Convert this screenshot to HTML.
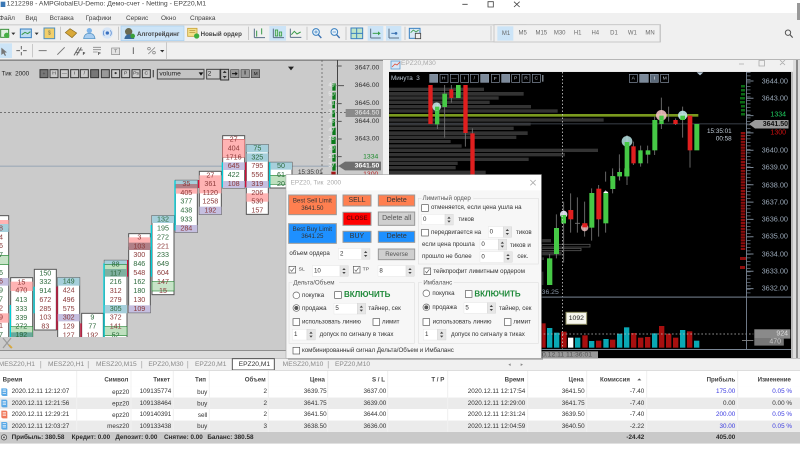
<!DOCTYPE html>
<html><head><meta charset="utf-8">
<style>
html,body{margin:0;padding:0;width:800px;height:457px;overflow:hidden;background:#f0f0f0}
svg{display:block;filter:blur(.25px)}
text{font-family:"Liberation Sans","Noto Sans CJK SC",sans-serif;dominant-baseline:central;white-space:pre}
.e{text-anchor:end}.m{text-anchor:middle}
.fp text{font-size:21.5px;text-anchor:middle}
.G{fill:#2f6b3e}.R{fill:#8b3a3a}
.tb{font-size:19px;fill:#333}
.hd{font-size:18.5px;fill:#444}
.bd{font-size:19px;fill:#2a2a2a;font-weight:bold}
.d{font-size:18.5px;fill:#333}
.inp{fill:#fff;stroke:#ddd}
.btn{stroke:#999;stroke-width:3}
.bt{font-size:21px;fill:#333;text-anchor:middle}
.tab{font-size:20px;fill:#888}
.px{font-size:7px;fill:#9aa8b8}
.ic{fill:none;stroke:#5a6f86;stroke-width:3}
.tf{font-size:18px;fill:#6a6a6a;text-anchor:middle}
</style></head>
<body>
<svg xmlns="http://www.w3.org/2000/svg" width="800" height="457" viewBox="0 0 800 457">
<defs>
<clipPath id="cL"><rect x="0" y="60" width="382" height="277"/></clipPath>
<clipPath id="cR"><rect x="389" y="72" width="402" height="278"/></clipPath>
<g id="sp"><rect width="25" height="32" fill="#e6e6e6" stroke="#ccc"/><path d="M7 13l5-6 5 6zM7 19l5 6 5-6z" fill="#444"/></g>
<g id="cb"><rect x="1" y="1" width="20" height="20" fill="#fff" stroke="#555" stroke-width="2"/></g>
<g id="cc"><rect x="1" y="1" width="20" height="20" fill="#fff" stroke="#555" stroke-width="2"/><path d="M5 11l4 5 8-11" fill="none" stroke="#555" stroke-width="2"/></g>
<g id="ra"><circle cx="11" cy="11" r="10" fill="#fff" stroke="#666" stroke-width="2"/></g>
<g id="rs"><circle cx="11" cy="11" r="10" fill="#fff" stroke="#666" stroke-width="2"/><circle cx="11" cy="11" r="6" fill="#555"/></g>
<g id="doc"><path d="M3 1h15l3 3v20H7l-4-3z" fill="#5aa9e6"/><path d="M7 6h10M7 11h10M7 16h10" stroke="#fff" stroke-width="2"/></g>
<g id="docr"><path d="M3 1h15l3 3v20H7l-4-3z" fill="#f0785a"/><path d="M7 6h10M7 11h10M7 16h10" stroke="#fff" stroke-width="2"/></g>
</defs>

<!-- window chrome -->
<rect width="800" height="13" fill="#fff"/>
<rect y="13" width="800" height="47" fill="#f0f0f0"/>
<rect x="797" y="3" width="3" height="17" fill="#999"/>
<g transform="scale(.33333)">
<path d="M2 5h14v16H2z" fill="#3b78b5"/>
<text x="20" y="12" font-size="20.5" fill="#444">1212298 - AMPGlobalEU-Demo: Демо-счет - Netting - EPZ20,M1</text>
<g font-size="19.5" fill="#444">
<text x="-3" y="56">Файл</text><text x="76" y="56">Вид</text><text x="149" y="56">Вставка</text><text x="257" y="56">Графики</text><text x="378" y="56">Сервис</text><text x="483" y="56">Окно</text><text x="570" y="56">Справка</text>
</g>
<path d="M1387 13h16M1464 5h16v16h-16zM1542 5l17 16M1559 5l-17 16" fill="none" stroke="#444" stroke-width="2.5"/>
<rect x="0" y="73" width="1580" height="3" fill="#c8c8c8"/>
<rect x="0" y="124" width="1500" height="3" fill="#c8c8c8"/>
<rect x="0" y="178" width="2400" height="4" fill="#9a9a9a"/>
<rect x="1497" y="73" width="3" height="54" fill="#c8c8c8"/><rect x="1980" y="73" width="3" height="54" fill="#c8c8c8"/>
<rect x="498" y="127" width="3" height="52" fill="#c8c8c8"/>

<!-- toolbar 1 icons -->
<rect x="2" y="88" width="24" height="24" fill="#dff0e0" stroke="#3a8f3a" stroke-width="3"/><circle cx="20" cy="106" r="8" fill="#45b045"/>
<path d="M34 98h12l-6 7z" fill="#333"/>
<rect x="61" y="87" width="33" height="26" fill="#bcdcf2" stroke="#3a80c0" stroke-width="3"/><path d="M65 104l10-7 8 4 8-6" fill="none" stroke="#3a9a4a" stroke-width="3"/>
<path d="M104 98h12l-6 7z" fill="#333"/>
<rect x="132" y="84" width="32" height="32" fill="#f3cf6a" stroke="#4c8ec0" stroke-width="3"/><text x="148" y="101" font-size="16" fill="#775" class="m">$</text>
<rect x="181" y="80" width="2" height="40" fill="#b5b5b5"/>
<path d="M196 98l14-12 20 13-14 14z" fill="#d9a93a" stroke="#8a6a20" stroke-width="2"/>
<circle cx="268" cy="92" r="8" fill="#7fb4e8"/><path d="M251 116q2-16 17-16t17 16z" fill="#a8cdf0" stroke="#4c8ec0" stroke-width="2"/>
<circle cx="322" cy="99" r="17" fill="#d8e6f6"/><circle cx="322" cy="99" r="5" fill="#3a70c0"/><path d="M313 91q-6 8 0 16M331 91q6 8 0 16" fill="none" stroke="#5a8ad0" stroke-width="2.5"/>
<rect x="354" y="80" width="2" height="40" fill="#b5b5b5"/>
<rect x="363" y="78" width="189" height="44" fill="#cce4f7" stroke="#a8d0f0" stroke-width="2"/>
<circle cx="386" cy="95" r="11" fill="#6a6a50"/><path d="M373 117q2-14 15-14t15 14z" fill="#3a6a9a"/><circle cx="398" cy="108" r="7" fill="#3aa03a"/>
<text x="411" y="103" font-size="18.5" fill="#444" font-weight="bold">Алготрейдинг</text>
<rect x="563" y="85" width="28" height="24" fill="#f3e08a" stroke="#c8a23a" stroke-width="2.5"/><path d="M568 92h18M568 98h18" stroke="#a88a30" stroke-width="2"/><circle cx="590" cy="108" r="8" fill="#3fae3f"/>
<text x="602" y="103" font-size="18.5" fill="#444" font-weight="bold">Новый ордер</text>
<rect x="745" y="80" width="2" height="40" fill="#b5b5b5"/>
<path d="M763 113h32M763 113V86" class="ic"/><path d="M770 92v18M785 85v18" stroke="#3a9a4a" stroke-width="3"/>
<rect x="808" y="78" width="50" height="44" fill="#cce4f7"/>
<path d="M820 113h32M820 113V86" class="ic"/><rect x="826" y="90" width="7" height="18" fill="#bfe5c8" stroke="#3a9a4a" stroke-width="2.5"/><rect x="838" y="96" width="7" height="12" fill="#bfe5c8" stroke="#3a9a4a" stroke-width="2.5"/>
<path d="M871 112h33M871 112V86" class="ic"/><path d="M874 104l9-10 8 8 11-6" fill="none" stroke="#3a9a4a" stroke-width="3"/>
<rect x="920" y="80" width="2" height="40" fill="#b5b5b5"/>
<circle cx="948" cy="96" r="10" fill="#e8f2fb" stroke="#3a80c0" stroke-width="3"/><path d="M955 104l9 10" stroke="#3a70b0" stroke-width="4"/><path d="M943 96h10M948 91v10" stroke="#3a80c0" stroke-width="2"/>
<circle cx="1003" cy="96" r="10" fill="#e8f2fb" stroke="#3a80c0" stroke-width="3"/><path d="M1010 104l9 10" stroke="#3a70b0" stroke-width="4"/><path d="M998 96h10" stroke="#3a80c0" stroke-width="2"/>
<rect x="1037" y="80" width="2" height="40" fill="#b5b5b5"/>
<rect x="1053" y="84" width="35" height="32" fill="#bfe5c8" stroke="#3a80c0" stroke-width="3"/><path d="M1070 84v32M1053 100h35" stroke="#3a80c0" stroke-width="3"/>
<rect x="1103" y="78" width="47" height="44" fill="#cce4f7"/><path d="M1112 86v28M1112 114h30" class="ic"/><path d="M1118 100h18" stroke="#3aa04a" stroke-width="3"/><path d="M1134 94l8 6-8 6z" fill="#3aa04a"/>
<rect x="1158" y="78" width="46" height="44" fill="#cce4f7"/><path d="M1167 86v28M1167 114h30" class="ic"/><path d="M1174 100h12" stroke="#3a70b0" stroke-width="3"/><circle cx="1188" cy="100" r="4" fill="#3a70b0"/>
<rect x="1214" y="80" width="2" height="40" fill="#b5b5b5"/>
<rect x="1228" y="85" width="32" height="30" fill="#d8e8f5" stroke="#3a80c0" stroke-width="3"/><path d="M1232 98l8-8 8 6 8-6" stroke="#3a9a4a" stroke-width="2.5" fill="none"/><rect x="1246" y="100" width="16" height="16" fill="#eee" stroke="#444" stroke-width="2.5"/>
<rect x="1472" y="78" width="2" height="44" fill="#b5b5b5"/>
<!-- timeframes -->
<rect x="1482" y="74" width="498" height="52" fill="#f0f0f0" stroke="#c8c8c8" stroke-width="3"/>
<rect x="1492" y="79" width="48" height="43" fill="#cce4f7"/>
<text x="1518" y="102" class="tf">M1</text><text x="1568" y="100" class="tf">M5</text><text x="1624" y="100" class="tf">M15</text><text x="1679" y="100" class="tf">M30</text><text x="1733" y="100" class="tf">H1</text><text x="1786" y="100" class="tf">H4</text><text x="1842" y="100" class="tf">D1</text><text x="1897" y="100" class="tf">W1</text><text x="1950" y="100" class="tf">MN</text>
<!-- status icons -->
<circle cx="2364" cy="98" r="8" fill="none" stroke="#555" stroke-width="3"/><path d="M2370 104l8 9" stroke="#555" stroke-width="3.5"/>
<circle cx="2414" cy="103" r="12" fill="#eee" stroke="#444" stroke-width="3"/><circle cx="2414" cy="101" r="4" fill="#555"/>
<circle cx="2432" cy="98" r="13" fill="#e23a2a"/><text x="2432" y="99" font-size="17" fill="#fff" class="m" font-weight="bold">1</text>
<path d="M2465 104a12 12 0 0 1 24 0M2471 104a6 6 0 0 1 12 0" fill="none" stroke="#2fb05a" stroke-width="4"/><circle cx="2477" cy="103" r="3" fill="#2fb05a"/><text x="2477" y="114" font-size="10" fill="#2fb05a" class="m" font-weight="bold">LVL</text>
<rect x="2508" y="91" width="71" height="22" fill="#fff" stroke="#bbb" stroke-width="2"/><rect x="2509" y="92" width="32" height="20" fill="#3bd13b"/>

<!-- toolbar 2 -->
<rect x="0" y="130" width="36" height="44" fill="#cce4f7"/>
<path d="M4 143l0 22 6-5 5 8 3-2-4-8 7-1z" fill="#777"/>
<path d="M49 152h11M69 152h11M64 138v10M64 156v10" stroke="#666" stroke-width="3"/>
<rect x="96" y="132" width="2" height="40" fill="#b5b5b5"/>
<path d="M116 152h24M172 164l22-22" stroke="#777" stroke-width="3"/>
<path d="M222 166l14-24M230 166l14-24M236 150h12M226 158h12" stroke="#666" stroke-width="3"/><text x="248" y="160" font-size="13" font-weight="bold" fill="#333">F</text>
<path d="M279 142h24M279 149h24M279 156h14" stroke="#888" stroke-width="2.5"/><text x="294" y="160" font-size="13" font-weight="bold" fill="#333">F</text>
<rect x="335" y="144" width="24" height="20" fill="#e2e2e2" stroke="#888" stroke-width="2"/><text x="347" y="154" font-size="15" fill="#555" class="m">T</text>
<path d="M400 142v20" stroke="#666" stroke-width="3"/>
<circle cx="447" cy="146" r="4" fill="none" stroke="#777" stroke-width="2"/><circle cx="462" cy="158" r="4" fill="none" stroke="#777" stroke-width="2"/><path d="M445 162l20-20" stroke="#777" stroke-width="2"/>
<path d="M480 150h13l-6 7z" fill="#333"/>
</g>

<!-- LEFT CHART -->
<rect x="0" y="60" width="383" height="290" fill="#cbcbcb"/>
<rect x="383" y="60" width="6" height="300" fill="#f0f0f0"/>
<rect x="0" y="60" width="383" height="1" fill="#8a8a8a"/>
<g clip-path="url(#cL)">
<rect x="0" y="165.5" width="346" height="1.5" fill="#a8b2bc"/>
<line x1="0" y1="112.5" x2="346" y2="112.5" stroke="#555" stroke-width=".7" stroke-dasharray="2 2"/>
<line x1="322" y1="60" x2="322" y2="337" stroke="#555" stroke-width=".7" stroke-dasharray="2 2"/>
<g transform="translate(0 100) scale(.33333)" class="fp">
<!-- A -->
<rect x="-30" y="347" width="56" height="380" fill="#fff" stroke="#555" stroke-width="3"/>
<rect x="-30" y="360" width="56" height="25" fill="#ffb3b3"/><rect x="-30" y="372" width="56" height="24" fill="#a6cfdb"/><rect x="-30" y="466" width="56" height="28" fill="#c8e3c8" stroke="#2a8a3a" stroke-width="2"/><rect x="-30" y="534" width="56" height="23" fill="#c5bfe0"/><rect x="-30" y="640" width="56" height="28" fill="#ffb3b3"/>
<text x="3" y="385" class="R">8</text><text x="3" y="412" class="R">4</text><text x="3" y="438" class="R">6</text><text x="3" y="465" class="G">7</text><text x="3" y="519" class="G">6</text><text x="3" y="545" class="R">6</text><text x="3" y="572" class="G">9</text><text x="3" y="598" class="G">7</text><text x="3" y="625" class="R">2</text><text x="3" y="652" class="R">9</text><text x="3" y="678" class="R">1</text><text x="3" y="705" class="G">7</text>
<!-- B -->
<rect x="32" y="533" width="66" height="195" fill="#fff" stroke="#555" stroke-width="3"/>
<rect x="32" y="545" width="66" height="28" fill="#ffb3b3"/><rect x="32" y="680" width="66" height="28" fill="#bfe0bf" stroke="#2a8a3a" stroke-width="2"/><rect x="32" y="697" width="66" height="14" fill="#6aa89a"/>
<rect x="29" y="615" width="4" height="100" fill="#00cfd8"/>
<text x="64" y="547" class="R">15</text><text x="64" y="572" class="R">470</text><text x="64" y="600" class="G">413</text><text x="64" y="627" class="G">333</text><text x="64" y="654" class="G">339</text><text x="64" y="680" class="G">272</text><text x="64" y="705" class="G">192</text>
<!-- C -->
<rect x="103" y="508" width="66" height="182" fill="#fff" stroke="#555" stroke-width="3"/>
<rect x="100" y="560" width="4" height="80" fill="#00cfd8"/>
<text x="136" y="520" class="G">150</text><text x="136" y="546" class="G">332</text><text x="136" y="573" class="G">914</text><text x="136" y="600" class="R">672</text><text x="136" y="627" class="R">285</text><text x="136" y="653" class="R">103</text><text x="136" y="680" class="R">83</text>
<!-- D -->
<rect x="173" y="533" width="66" height="195" fill="#fff" stroke="#555" stroke-width="3"/>
<rect x="173" y="533" width="66" height="24" fill="#a6cfdb"/><rect x="173" y="642" width="66" height="22" fill="#c5bfe0"/>
<rect x="169" y="560" width="4" height="130" fill="#d0103a"/>
<text x="206" y="545" class="G">149</text><text x="206" y="572" class="R">424</text><text x="206" y="600" class="R">496</text><text x="206" y="627" class="R">575</text><text x="206" y="653" class="R">302</text><text x="206" y="680" class="R">129</text><text x="206" y="706" class="R">127</text>
<!-- E -->
<rect x="245" y="640" width="65" height="90" fill="#fff" stroke="#555" stroke-width="3"/>
<rect x="241" y="670" width="4" height="50" fill="#d0103a"/>
<text x="277" y="653" class="G">9</text><text x="277" y="680" class="G">77</text><text x="277" y="706" class="R">192</text>
<!-- F -->
<rect x="313" y="481" width="68" height="250" fill="#fff" stroke="#555" stroke-width="3"/>
<rect x="313" y="481" width="68" height="14" fill="#a6cfdb"/><rect x="313" y="494" width="68" height="27" fill="#bfe0bf" stroke="#2a8a3a" stroke-width="2"/><rect x="313" y="507" width="68" height="23" fill="#7fb0a0"/><rect x="313" y="615" width="68" height="25" fill="#a6cfdb"/><rect x="313" y="680" width="68" height="27" fill="#bfe0bf" stroke="#2a8a3a" stroke-width="2"/>
<rect x="310" y="490" width="4" height="225" fill="#00cfd8"/><rect x="381" y="480" width="4" height="50" fill="#d0103a"/>
<text x="347" y="493" class="G">88</text><text x="347" y="520" class="G">117</text><text x="347" y="546" class="G">216</text><text x="347" y="573" class="R">312</text><text x="347" y="600" class="R">279</text><text x="347" y="627" class="G">305</text><text x="347" y="653" class="R">372</text><text x="347" y="680" class="R">141</text><text x="347" y="706" class="G">52</text>
<!-- G -->
<rect x="386" y="401" width="65" height="237" fill="#fff" stroke="#555" stroke-width="3"/>
<rect x="386" y="412" width="65" height="28" fill="#ffb3b3"/><rect x="386" y="428" width="65" height="22" fill="#b07f87"/><rect x="386" y="616" width="65" height="22" fill="#c5bfe0"/>
<text x="418" y="412" class="R">3</text><text x="418" y="439" class="R">103</text><text x="418" y="465" class="R">300</text><text x="418" y="492" class="G">846</text><text x="418" y="519" class="R">548</text><text x="418" y="546" class="G">162</text><text x="418" y="573" class="G">180</text><text x="418" y="600" class="R">130</text><text x="418" y="627" class="R">109</text>
<!-- H -->
<rect x="456" y="347" width="66" height="237" fill="#fff" stroke="#555" stroke-width="3"/>
<rect x="456" y="347" width="66" height="22" fill="#a6cfdb"/><rect x="456" y="545" width="66" height="28" fill="#c8e3c8" stroke="#2a8a3a" stroke-width="2"/>
<rect x="452" y="375" width="4" height="155" fill="#00cfd8"/>
<text x="489" y="358" class="G">132</text><text x="489" y="385" class="G">195</text><text x="489" y="412" class="G">272</text><text x="489" y="439" class="R">221</text><text x="489" y="465" class="G">233</text><text x="489" y="492" class="G">649</text><text x="489" y="519" class="R">604</text><text x="489" y="546" class="R">147</text><text x="489" y="573" class="R">15</text>
<!-- I -->
<rect x="526" y="241" width="66" height="156" fill="#fff" stroke="#555" stroke-width="3"/>
<rect x="526" y="241" width="66" height="12" fill="#a6cfdb"/><rect x="526" y="252" width="66" height="14" fill="#b07f87"/><rect x="526" y="265" width="66" height="16" fill="#ffb3b3"/><rect x="526" y="375" width="66" height="22" fill="#c5bfe0"/>
<rect x="523" y="241" width="4" height="150" fill="#00cfd8"/>
<text x="559" y="252" class="R">35</text><text x="559" y="279" class="R">405</text><text x="559" y="305" class="G">377</text><text x="559" y="332" class="G">438</text><text x="559" y="358" class="G">933</text><text x="559" y="385" class="R">284</text>
<!-- J -->
<rect x="598" y="214" width="66" height="129" fill="#fff" stroke="#555" stroke-width="3"/>
<rect x="598" y="226" width="66" height="54" fill="#ffb3b3"/><rect x="598" y="320" width="66" height="23" fill="#c5bfe0"/>
<rect x="594" y="240" width="4" height="24" fill="#d0103a"/>
<text x="631" y="226" class="R">27</text><text x="631" y="252" class="R">361</text><text x="631" y="279" class="R">1120</text><text x="631" y="305" class="R">1258</text><text x="631" y="332" class="R">192</text>
<!-- K -->
<rect x="668" y="107" width="66" height="157" fill="#fff" stroke="#555" stroke-width="3"/>
<rect x="668" y="118" width="66" height="54" fill="#ffb3b3" stroke="#c96a6a" stroke-width="2"/><rect x="668" y="187" width="66" height="23" fill="#c5bfe0"/><rect x="668" y="243" width="66" height="21" fill="#c5bfe0"/>
<rect x="665" y="187" width="4" height="75" fill="#00cfd8"/>
<text x="701" y="118" class="R">27</text><text x="701" y="145" class="R">404</text><text x="701" y="172" class="R">1716</text><text x="701" y="198" class="R">645</text><text x="701" y="225" class="G">422</text><text x="701" y="252" class="R">108</text>
<!-- L -->
<rect x="739" y="134" width="66" height="209" fill="#fff" stroke="#555" stroke-width="3"/>
<rect x="739" y="134" width="66" height="23" fill="#a6cfdb"/><rect x="739" y="160" width="66" height="25" fill="#a6cfdb"/><rect x="739" y="243" width="66" height="21" fill="#c5bfe0"/><rect x="739" y="280" width="66" height="25" fill="#ffb3b3"/>
<rect x="735" y="187" width="4" height="75" fill="#d0103a"/>
<text x="772" y="145" class="G">75</text><text x="772" y="172" class="G">325</text><text x="772" y="198" class="R">795</text><text x="772" y="225" class="R">556</text><text x="772" y="252" class="R">319</text><text x="772" y="279" class="R">206</text><text x="772" y="305" class="R">530</text><text x="772" y="332" class="R">157</text>
<!-- M -->
<rect x="810" y="187" width="66" height="77" fill="#fff" stroke="#555" stroke-width="3"/>
<rect x="810" y="187" width="66" height="22" fill="#a6cfdb"/><rect x="810" y="226" width="66" height="27" fill="#bfe0bf" stroke="#2a8a3a" stroke-width="2"/>
<rect x="807" y="187" width="4" height="75" fill="#00cfd8"/>
<text x="843" y="198" class="G">50</text><text x="843" y="225" class="G">61</text><text x="843" y="252" class="G">20</text>
</g>
</g>
<!-- left chart toolbar + scale -->
<g transform="scale(.33333)">
<text x="5" y="222" font-size="19" fill="#222">Тик  2000</text>
<g fill="#cbcbcb" stroke="#333" stroke-width="3">
<rect x="120" y="209" width="24" height="24" fill="#777"/><rect x="150" y="209" width="24" height="24"/><rect x="181" y="209" width="24" height="24"/><rect x="212" y="209" width="24" height="24"/><rect x="241" y="209" width="24" height="24"/><rect x="272" y="209" width="24" height="24" fill="#777"/><rect x="304" y="209" width="24" height="24" fill="#999"/><rect x="335" y="209" width="24" height="24"/><rect x="365" y="209" width="24" height="24"/><rect x="396" y="209" width="24" height="24"/><rect x="427" y="209" width="24" height="24"/>
</g>
<g font-size="15" fill="#333" text-anchor="middle">
<text x="132" y="222">+</text><text x="162" y="221">H</text><text x="193" y="220">—</text><text x="224" y="221">I</text><text x="253" y="221">/</text><text x="347" y="221">●</text><text x="377" y="221">P</text><text x="408" y="221">Ps</text><text x="439" y="221">C</text>
</g>
<rect x="458" y="210" width="4" height="22" fill="#555"/>
<rect x="472" y="208" width="140" height="29" fill="#c4c4c4" stroke="#444" stroke-width="3"/><text x="478" y="222" font-size="20" fill="#222">volume</text><path d="M596 217h14l-7 10z" fill="#111"/>
<rect x="620" y="208" width="40" height="29" fill="#c8c8c8" stroke="#444" stroke-width="3"/><text x="623" y="222" font-size="20" fill="#222">2</text>
<rect x="662" y="208" width="24" height="32" fill="#b8b8b8" stroke="#333" stroke-width="3"/><path d="M668 219l6-7 6 7zM668 228l6 7 6-7z" fill="#333"/>
<rect x="692" y="209" width="25" height="24" fill="#999" stroke="#444" stroke-width="2"/><path d="M696 221h14" stroke="#111" stroke-width="3"/><path d="M706 215l7 6-7 6z" fill="#111"/>
<rect x="723" y="209" width="25" height="24" fill="#999" stroke="#444" stroke-width="2"/><text x="735" y="221" font-size="17" fill="#111" text-anchor="middle" font-weight="bold">I</text>
<rect x="754" y="209" width="25" height="24" fill="#888" stroke="#444" stroke-width="2"/><text x="767" y="221" font-size="14" fill="#111" text-anchor="middle">M</text>
<path d="M864 200h18l-9 11z" fill="#222"/>
</g>
<rect x="337" y="60" width="1" height="115" fill="#444"/>
<g transform="translate(200 55) scale(.33333)">
<path d="M410 33h15M410 92h22M410 146h15M410 199h15M410 252h15M410 305h15" stroke="#555" stroke-width="3"/>
<g fill="#0a7a1a"><rect x="397" y="85" width="10" height="22"/><rect x="397" y="112" width="10" height="22"/><rect x="397" y="138" width="8" height="22"/><rect x="397" y="165" width="8" height="22"/><rect x="397" y="192" width="8" height="22"/><rect x="397" y="218" width="10" height="22"/><rect x="394" y="245" width="13" height="22"/><rect x="397" y="272" width="10" height="22"/><rect x="397" y="298" width="10" height="22"/><rect x="397" y="325" width="10" height="22"/></g>
<g font-size="17" fill="#f2f2f2" text-anchor="end"><text x="404" y="92">49</text><text x="404" y="119">50</text><text x="404" y="146">41</text><text x="404" y="173">30</text><text x="404" y="199">46</text><text x="404" y="226">47</text><text x="404" y="252">28</text><text x="404" y="280">20</text><text x="404" y="306">21</text><text x="404" y="333">37</text></g>
<g font-size="20.5" fill="#333" text-anchor="end"><text x="538" y="39">3647.00</text><text x="538" y="92">3646.00</text><text x="538" y="146">3645.00</text><text x="538" y="199">3644.00</text><text x="538" y="252">3643.00</text></g>
<text x="535" y="306" font-size="20.5" fill="#1a8a2a" text-anchor="end">1334</text>
<rect x="437" y="162" width="106" height="24" fill="#8a8a8a"/><text x="538" y="174" font-size="20.5" fill="#e8e8e8" text-anchor="end">3644.50</text>
<path d="M415 333l20-13h108v26H435z" fill="#6e6e6e"/><text x="538" y="333" font-size="20.5" fill="#fff" text-anchor="end" font-weight="bold">3641.50</text>
<text x="368" y="353" font-size="19" fill="#333" text-anchor="end">15:35:01</text>
<rect x="394" y="350" width="13" height="20" fill="#a01515"/>
<text x="535" y="358" font-size="20.5" fill="#b02020" text-anchor="end">1300</text>
</g>
<!-- wrench -->
<path d="M3 338l8 10M11 338l-8 10" stroke="#9a9a9a" stroke-width="1.2"/><path d="M9 345l3 3" stroke="#d9a93a" stroke-width="1.6"/>
<rect x="0" y="350" width="385" height="1" fill="#8f8f8f"/>
<rect x="0" y="351" width="389" height="8" fill="#dcdcdc"/>

<!-- RIGHT WINDOW -->
<rect x="389" y="60" width="411" height="299" fill="#dcdcdc"/>
<rect x="385" y="60" width="408" height="11.500" fill="#f0f0f0"/>
<rect x="385" y="60" width="4" height="299" fill="#f0f0f0"/>
<rect x="391" y="61" width="9" height="8" fill="#d9e8f8" stroke="#5a9ad0" stroke-width=".8"/><path d="M392 67l3-3 2 1 3-3" stroke="#e0503a" stroke-width=".8" fill="none"/>
<text x="401" y="63.500" font-size="6.600" fill="#aaa">EPZ20,M30</text>
<path d="M739 64h5M759 60.500h5.500v5.500h-5.500zM780 60l5 5M785 60l-5 5" fill="none" stroke="#aaa" stroke-width=".8"/>
<rect x="389" y="72" width="402" height="286" fill="#000"/>
<rect x="791" y="72" width="2" height="286" fill="#b8b8b8"/>
<rect x="796" y="60" width="2" height="298" fill="#888"/>
<g clip-path="url(#cR)">
<g transform="translate(385 55) scale(.33333)">
<g fill="#333">
<rect x="12" y="98" width="285" height="10"/><rect x="12" y="111" width="404" height="11"/><rect x="12" y="124" width="329" height="10"/><rect x="12" y="137" width="302" height="10"/><rect x="12" y="150" width="426" height="10"/><rect x="12" y="163" width="506" height="10"/><rect x="12" y="190" width="644" height="10"/><rect x="12" y="203" width="425" height="9"/><rect x="12" y="215" width="374" height="10"/><rect x="12" y="229" width="416" height="11"/><rect x="12" y="242" width="382" height="10"/><rect x="12" y="255" width="185" height="9"/><rect x="12" y="268" width="218" height="10"/><rect x="12" y="281" width="627" height="10"/><rect x="12" y="294" width="528" height="10"/><rect x="12" y="308" width="419" height="10"/><rect x="12" y="320" width="206" height="10"/><rect x="12" y="333" width="200" height="10"/><rect x="12" y="347" width="290" height="10"/><rect x="12" y="360" width="330" height="10"/>
</g>
<rect x="12" y="177" width="928" height="8" fill="#7a9a1e"/>
<rect x="12" y="205" width="1080" height="3" fill="#3a3f48"/>
<g stroke="#777" stroke-width="2.500">
<path d="M157 145v77M179 90v158M199 90v53M241 90v185M262 220v160M726 240v135M745 260v70M767 272v63M788 272v53M809 185v115M829 128v94M851 155v45M872 190v20M893 155v93M915 182v156M703 298v77M683 340v40M662 350v30"/>
</g>
<g fill="#e01f1f"><rect x="130" y="90" width="13" height="117"/><rect x="193" y="103" width="12" height="26"/><rect x="235" y="90" width="13" height="144"/><rect x="256" y="235" width="13" height="130"/><rect x="739" y="274" width="13" height="51"/><rect x="865" y="195" width="13" height="12"/><rect x="908" y="182" width="14" height="104"/></g>
<g fill="#46c946"><rect x="150" y="155" width="13" height="53"/><rect x="172" y="116" width="14" height="40"/><rect x="213" y="90" width="14" height="39"/><rect x="719" y="261" width="14" height="103"/><rect x="760" y="286" width="13" height="39"/><rect x="782" y="286" width="14" height="13"/><rect x="802" y="195" width="15" height="91"/><rect x="823" y="182" width="13" height="25"/><rect x="886" y="182" width="14" height="13"/><rect x="928" y="207" width="15" height="79"/><rect x="697" y="351" width="13" height="13"/><rect x="676" y="363" width="13" height="15"/></g>
<circle cx="155" cy="155" r="13" fill="#cfeeee" opacity=".85"/><rect x="150" y="155" width="13" height="12" fill="#46c946"/>
<circle cx="726" cy="259" r="16" fill="#b8e4e4" opacity=".85"/><rect x="719" y="261" width="14" height="14" fill="#46c946"/>
<circle cx="829" cy="181" r="16" fill="#f0c0c0" opacity=".9"/><rect x="823" y="182" width="13" height="14" fill="#46c946"/>
<circle cx="893" cy="181" r="14" fill="#bfe8e8" opacity=".9"/><rect x="886" y="182" width="14" height="13" fill="#46c946"/>
<!-- chart buttons -->
<g fill="none" stroke="#8a97a8" stroke-width="2">
<rect x="134" y="58" width="24" height="24" fill="#7c8a9a"/><rect x="165" y="58" width="24" height="24"/><rect x="196" y="58" width="24" height="24"/><rect x="227" y="58" width="24" height="24"/><rect x="256" y="58" width="24" height="24"/><rect x="287" y="58" width="24" height="24" fill="#7c8a9a"/><rect x="319" y="58" width="24" height="24"/><rect x="350" y="58" width="24" height="24" fill="#7c8a9a"/><rect x="380" y="58" width="24" height="24"/><rect x="411" y="58" width="24" height="24"/><rect x="442" y="58" width="24" height="24"/>
<rect x="733" y="58" width="24" height="24"/><rect x="764" y="58" width="26" height="24" fill="#7c8a9a"/><rect x="796" y="58" width="24" height="24" fill="#5c6a7a"/><rect x="827" y="58" width="24" height="24"/>
</g>
<g font-size="15" fill="#b5c0cc" text-anchor="middle"><text x="176" y="70">H</text><text x="207" y="70">—</text><text x="238" y="70">I</text><text x="268" y="70">/</text><text x="331" y="72">F</text><text x="392" y="70">P</text><text x="423" y="70">R</text><text x="454" y="70">C</text><text x="745" y="70">A</text><text x="808" y="70" fill="#fff">I</text><text x="839" y="70">M</text></g>
<text x="18" y="71" font-size="19" fill="#b8c4d0">Минута  3</text>
<rect x="472" y="60" width="3" height="20" fill="#b5c0cc"/>
<path d="M935 52h20l-10 9z" fill="#b9ccdc"/>
<text x="1040" y="229" font-size="19" fill="#c4d0dc" text-anchor="end">15:35:01</text>
<text x="1040" y="252" font-size="19" fill="#c4d0dc" text-anchor="end">00:58</text>
</g>
<!-- lower candles -->
<g transform="translate(540 170) scale(.33333)">
<g fill="#333"><rect x="5" y="207" width="28" height="10"/><rect x="5" y="245" width="60" height="11"/><rect x="5" y="262" width="7" height="8"/><rect x="5" y="305" width="5" height="40"/></g>
<g fill="none" stroke="#555" stroke-width="2.500"><rect x="5" y="223" width="145" height="8"/><rect x="5" y="235" width="118" height="7"/></g>
<g stroke="#777" stroke-width="2.500"><path d="M29 252v93M49 133v132M71 95v183M92 70v118M112 82v106M134 95v105M155 55v157M176 45v155M197 60v128M218 5v65M239 -5v37M261 -5v50M105 160h15"/></g>
<g fill="#46c946"><rect x="21" y="265" width="16" height="80"/><rect x="42" y="174" width="15" height="78"/><rect x="64" y="135" width="14" height="25"/><rect x="148" y="69" width="15" height="104"/><rect x="190" y="69" width="15" height="91"/><rect x="211" y="19" width="15" height="38"/><rect x="232" y="6" width="14" height="13"/><rect x="253" y="-5" width="15" height="24"/></g>
<g fill="#e01f1f"><rect x="85" y="120" width="15" height="28"/><rect x="127" y="160" width="15" height="12"/><rect x="169" y="56" width="15" height="92"/></g>
<circle cx="71" cy="133" r="11" fill="#eef" opacity=".9"/><rect x="64" y="135" width="14" height="25" fill="#46c946"/>
<circle cx="134" cy="173" r="11" fill="#f0c0c0" opacity=".85"/><rect x="127" y="160" width="15" height="12" fill="#e01f1f"/>
<path d="M190 69a8 8 0 0 1 15 0z" fill="#fff"/>
<text x="5" y="367" font-size="20.500" fill="#8a97a8">36.25</text>
<!-- volume -->
<g fill="#0aa8b4"><rect x="21" y="474" width="16" height="59"/><rect x="42" y="488" width="16" height="45"/><rect x="105" y="503" width="16" height="30"/><rect x="147" y="513" width="16" height="20"/><rect x="190" y="507" width="16" height="26"/><rect x="231" y="491" width="16" height="42"/><rect x="252" y="472" width="16" height="61"/><rect x="336" y="490" width="16" height="43"/><rect x="420" y="480" width="16" height="53"/><rect x="462" y="512" width="16" height="21"/></g>
<g fill="#a80f0f"><rect x="0" y="460" width="17" height="73"/><rect x="63" y="485" width="17" height="48"/><rect x="127" y="496" width="16" height="37"/><rect x="168" y="512" width="16" height="21"/><rect x="210" y="509" width="16" height="24"/><rect x="273" y="489" width="16" height="44"/><rect x="294" y="503" width="16" height="30"/><rect x="315" y="501" width="16" height="32"/><rect x="357" y="468" width="16" height="65"/><rect x="378" y="491" width="16" height="42"/><rect x="399" y="503" width="16" height="30"/><rect x="441" y="484" width="16" height="49"/></g>
<rect x="84" y="503" width="16" height="30" fill="#fff"/>
<line x1="0" y1="492" x2="640" y2="492" stroke="#bbb" stroke-width="2" stroke-dasharray="5 6"/>
<rect x="78" y="427" width="62" height="36" fill="#f5f5ec" stroke="#8a8a60" stroke-width="3"/><text x="109" y="445" font-size="20.500" fill="#222" text-anchor="middle">1092</text>
<rect x="606" y="510" width="34" height="3" fill="#777"/>
</g>
<!-- dotted crosshair -->
<line x1="562.500" y1="72" x2="562.500" y2="349" stroke="#ccc" stroke-width=".8" stroke-dasharray="1.500 2"/>
<rect x="389" y="296.600" width="402" height="1" fill="#7a8694"/>
<rect x="389" y="349" width="402" height="1" fill="#7a8694"/>
</g>
<!-- right scale -->
<rect x="746" y="72" width=".9" height="278" fill="#7a8694"/>
<line x1="750" y1="72" x2="750" y2="296" stroke="#7a8694" stroke-width="7" stroke-dasharray="1 16.300" stroke-dashoffset="-8.500"/>
<line x1="748.500" y1="72" x2="748.500" y2="296" stroke="#6a7684" stroke-width="4" stroke-dasharray=".7 2.800"/>
<g fill="#0a6a14"><rect x="741" y="85" width="4" height="2.500"/><rect x="741" y="89" width="4" height="2.500"/><rect x="741" y="93" width="4" height="2.500"/><rect x="740" y="97" width="5" height="2.500"/><rect x="740" y="101" width="5" height="2.500"/><rect x="741" y="105" width="4" height="2.500"/><rect x="741" y="109" width="4" height="2.500"/><rect x="741" y="113" width="4" height="2.500"/></g>
<line x1="743" y1="132" x2="743" y2="250" stroke="#8f0d0d" stroke-width="4.500" stroke-dasharray="2.200 .7"/>
<rect x="740" y="257" width="6" height="3" fill="#8f0d0d"/><rect x="740" y="266" width="5" height="3" fill="#8f0d0d"/>
<g font-size="7.300" fill="#9aa8b8" text-anchor="end">
<text x="788" y="81">3644.00</text><text x="788" y="98">3643.00</text><text x="788" y="150">3640.00</text><text x="788" y="167">3639.00</text><text x="788" y="185">3638.00</text><text x="788" y="202">3637.00</text><text x="788" y="219">3636.00</text><text x="788" y="236">3635.00</text><text x="788" y="254">3634.00</text><text x="788" y="271">3633.00</text><text x="788" y="288">3632.00</text>
</g>
<text x="786" y="115" font-size="7" fill="#1fd060" text-anchor="end">1334</text>
<text x="786" y="133" font-size="7" fill="#d01010" text-anchor="end">1300</text>
<path d="M749 124l6-4h33.500v8.500H755z" fill="#9a9a9a"/><text x="788" y="124.300" font-size="7" fill="#111" text-anchor="end" font-weight="bold">3641.50</text>
<rect x="754.300" y="329.300" width="36" height="9.300" fill="#8a8a8a"/><text x="788" y="334" font-size="7" fill="#ddd" text-anchor="end">924</text>
<rect x="754.300" y="338.600" width="29.500" height="7" fill="#777"/><text x="781" y="342" font-size="7" fill="#ccc" text-anchor="end">470</text>
<rect x="541" y="351.300" width="57" height="7" fill="#999"/><text x="542" y="355" font-size="6.800" fill="#555">0.12.11 11:36:01</text>

<!-- tabs + table -->
<g transform="translate(0 355) scale(.33333)">
<rect x="0" y="10" width="2400" height="35" fill="#f0f0f0"/>
<rect x="0" y="9" width="2400" height="2" fill="#aaa"/>
<text x="-4" y="29" class="tab">MESZ20,H1</text><text x="144" y="29" class="tab">MESZ20,H1</text><text x="288" y="29" class="tab">MESZ20,M15</text><text x="445" y="29" class="tab">EPZ20,M30</text><text x="585" y="29" class="tab">EPZ20,M1</text>
<rect x="697" y="11" width="126" height="34" fill="#fff" stroke="#555" stroke-width="3"/><text x="716" y="29" class="tab" style="fill:#333">EPZ20,M1</text>
<text x="848" y="29" class="tab">MESZ20,M10</text><text x="1005" y="29" class="tab">EPZ20,M10</text>
<path d="M122 18v22M265 18v22M425 18v22M563 18v22M985 18v22" stroke="#bbb" stroke-width="3"/>
<path d="M1532 25l-7 4 7 4zM1562 25l7 4-7 4z" fill="#888"/>
<rect x="0" y="45" width="2400" height="3" fill="#ddd"/>
<rect x="0" y="48" width="2400" height="47" fill="#fff"/>
<rect x="0" y="95" width="2400" height="33" fill="#fff"/>
<rect x="0" y="128" width="2400" height="34" fill="#ebebeb"/>
<rect x="0" y="162" width="2400" height="35" fill="#fff"/>
<rect x="0" y="197" width="2400" height="33" fill="#ebebeb"/>
<rect x="0" y="231" width="2400" height="35" fill="#c9c9c9"/>
<rect x="0" y="266" width="2400" height="40" fill="#fff"/>
<path d="M230 48v182M393 48v182M520 48v182M628 48v182M805 48v182M983 48v182M1163 48v182M1343 48v182M1583 48v182M1760 48v182M1940 48v182M2213 48v182" stroke="#f0f0f0" stroke-width="3"/>
<g class="hd" font-weight="bold">
<text x="8" y="75" class="hd">Время</text>
<g text-anchor="end"><text x="385" y="75">Символ</text><text x="510" y="75">Тикет</text><text x="618" y="75">Тип</text><text x="797" y="75">Объем</text><text x="975" y="75">Цена</text><text x="1155" y="75">S / L</text><text x="1333" y="75">T / P</text><text x="1573" y="75">Время</text><text x="1751" y="75">Цена</text><text x="1890" y="75">Комиссия</text><text x="2206" y="75">Прибыль</text><text x="2373" y="75">Изменение</text></g>
</g>
<path d="M1912 76h12l-6-6z" fill="#555"/>
<use href="#doc" x="1" y="99"/><use href="#doc" x="1" y="133"/><use href="#docr" x="1" y="166"/><use href="#doc" x="1" y="200"/>
<g class="tb">
<text x="35" y="110">2020.12.11 12:12:07</text><text x="35" y="145">2020.12.11 12:21:56</text><text x="35" y="179">2020.12.11 12:29:21</text><text x="35" y="214">2020.12.11 12:03:27</text>
<g text-anchor="end">
<text x="388" y="112">epz20</text><text x="388" y="147">epz20</text><text x="388" y="181">epz20</text><text x="388" y="215">mesz20</text>
<text x="514" y="110">109135774</text><text x="514" y="145">109138464</text><text x="514" y="179">109140391</text><text x="514" y="214">109133438</text>
<text x="622" y="112">buy</text><text x="622" y="147">buy</text><text x="622" y="181">sell</text><text x="622" y="215">buy</text>
<text x="801" y="110">2</text><text x="801" y="145">2</text><text x="801" y="179">2</text><text x="801" y="214">3</text>
<text x="980" y="110">3639.75</text><text x="980" y="145">3641.75</text><text x="980" y="179">3641.50</text><text x="980" y="214">3638.50</text>
<text x="1159" y="110">3637.00</text><text x="1159" y="145">3639.00</text><text x="1159" y="179">3644.00</text><text x="1159" y="214">3636.00</text>
<text x="1576" y="110">2020.12.11 12:17:54</text><text x="1576" y="145">2020.12.11 12:29:00</text><text x="1576" y="179">2020.12.11 12:31:24</text><text x="1576" y="214">2020.12.11 12:04:59</text>
<text x="1754" y="110">3641.50</text><text x="1754" y="145">3641.75</text><text x="1754" y="179">3639.50</text><text x="1754" y="214">3640.50</text>
<text x="1933" y="110">-7.40</text><text x="1933" y="145">-7.40</text><text x="1933" y="179">-7.40</text><text x="1933" y="214">-2.22</text>
<text x="2206" y="110" style="fill:#3a3ae0">175.00</text><text x="2206" y="145">0.00</text><text x="2206" y="179" style="fill:#3a3ae0">200.00</text><text x="2206" y="214" style="fill:#3a3ae0">30.00</text>
<text x="2376" y="110" style="fill:#3a3ae0">0.05 %</text><text x="2376" y="145">0.00 %</text><text x="2376" y="179" style="fill:#3a3ae0">0.05 %</text><text x="2376" y="214" style="fill:#3a3ae0">0.05 %</text>
</g>
</g>
<circle cx="12" cy="247" r="8" fill="#ddd" stroke="#555" stroke-width="2.500"/><circle cx="12" cy="247" r="3" fill="#555"/>
<g class="bd">
<text x="35" y="248">Прибыль: 380.58</text><text x="215" y="248">Кредит: 0.00</text><text x="346" y="248">Депозит: 0.00</text><text x="492" y="248">Снятие: 0.00</text><text x="622" y="248">Баланс: 380.58</text>
<text x="1933" y="248" text-anchor="end">-24.42</text><text x="2206" y="248" text-anchor="end">405.00</text>
</g>
</g>

<!-- DIALOG -->
<rect x="288" y="177" width="255" height="183" fill="#000" opacity=".22"/>
<g transform="translate(280 170) scale(.33333)">
<rect x="18" y="14" width="766" height="551" fill="#f7f7f7" stroke="#aaa" stroke-width="2"/>
<rect x="19" y="15" width="764" height="46" fill="#fff"/>
<text x="32" y="39" font-size="19" fill="#aaa">EPZ20, Тик  2000</text>
<path d="M751 30l16 16M767 30l-16 16" stroke="#aaa" stroke-width="2.500"/>
<!-- buttons -->
<rect x="26" y="75" width="143" height="59" fill="#ff7f50" class="btn"/>
<text x="97" y="93" class="bt" style="font-size:18.5px">Best Sell Limit</text><text x="97" y="115" class="bt" style="font-size:18.5px">3641.50</text>
<rect x="26" y="161" width="143" height="59" fill="#1e90ff" class="btn"/>
<text x="97" y="179" class="bt" style="font-size:18.5px">Best Buy Limit</text><text x="97" y="200" class="bt" style="font-size:18.5px">3641.25</text>
<rect x="189" y="75" width="84" height="33" fill="#ff7f50" class="btn"/><text x="231" y="91" class="bt">SELL</text>
<rect x="295" y="75" width="109" height="33" fill="#ff7f50" class="btn"/><text x="350" y="91" class="bt">Delete</text>
<rect x="189" y="127" width="84" height="39" fill="#ff0000" class="btn"/><text x="231" y="145" class="bt" style="font-size:18.5px;font-weight:bold;fill:#700">CLOSE</text>
<rect x="295" y="126" width="109" height="40" fill="#cfcfcf" class="btn"/><text x="350" y="145" class="bt" style="fill:#555">Delete all</text>
<rect x="189" y="184" width="84" height="33" fill="#1e90ff" class="btn"/><text x="231" y="200" class="bt">BUY</text>
<rect x="295" y="184" width="109" height="33" fill="#1e90ff" class="btn"/><text x="350" y="200" class="bt">Delete</text>
<text x="28" y="250" class="d">объем ордера</text>
<rect x="175" y="236" width="70" height="32" class="inp"/><use href="#sp" x="245" y="236"/><text x="180" y="252" class="d">2</text>
<rect x="295" y="237" width="109" height="32" fill="#cfcfcf" class="btn"/><text x="350" y="254" class="bt" style="font-size:18.5px;fill:#555">Reverse</text>
<use href="#cc" x="26" y="288"/><text x="56" y="298" font-size="15" fill="#444">SL</text>
<rect x="97" y="287" width="83" height="32" class="inp"/><use href="#sp" x="180" y="287"/><text x="102" y="303" class="d">10</text>
<use href="#cc" x="219" y="288"/><text x="248" y="298" font-size="15" fill="#444">TP</text>
<rect x="294" y="287" width="84" height="32" class="inp"/><use href="#sp" x="378" y="287"/><text x="298" y="303" class="d">8</text>
<!-- group limit -->
<rect x="415" y="85" width="360" height="197" fill="none" stroke="#e0e0e0" stroke-width="2"/>
<rect x="425" y="78" width="155" height="16" fill="#f7f7f7"/><text x="428" y="86" class="d" style="fill:#555">Лимитный ордер</text>
<use href="#cb" x="424" y="103"/><text x="453" y="113" class="d">отменяется, если цена ушла на</text>
<rect x="424" y="133" width="71" height="31" class="inp"/><use href="#sp" x="495" y="133"/><text x="429" y="149" class="d">0</text><text x="535" y="148" class="d">тиков</text>
<use href="#cb" x="424" y="177"/><text x="453" y="188" class="d">передвигается на</text>
<rect x="625" y="170" width="45" height="32" class="inp"/><use href="#sp" x="670" y="170"/><text x="629" y="186" class="d">0</text><text x="708" y="188" class="d">тиков</text>
<text x="426" y="224" class="d">если цена прошла</text>
<rect x="600" y="208" width="55" height="31" class="inp"/><use href="#sp" x="655" y="208"/><text x="604" y="224" class="d">0</text><text x="690" y="226" class="d">тиков и</text>
<text x="426" y="260" class="d">прошло не более</text>
<rect x="600" y="245" width="72" height="32" class="inp"/><use href="#sp" x="672" y="245"/><text x="604" y="261" class="d">0</text><text x="712" y="260" class="d">сек.</text>
<use href="#cc" x="431" y="293"/><text x="460" y="305" class="d">тейкпрофит лимитным ордером</text>
<!-- group delta -->
<rect x="27" y="338" width="376" height="182" fill="none" stroke="#e0e0e0" stroke-width="2"/>
<rect x="37" y="331" width="140" height="16" fill="#f7f7f7"/><text x="40" y="339" class="d" style="fill:#555">Дельта/Объем</text>
<use href="#ra" x="38" y="365"/><text x="66" y="376" class="d">покупка</text>
<use href="#cb" x="163" y="364"/><text x="192" y="374" font-size="24" font-weight="bold" fill="#1f8a3a">ВКЛЮЧИТЬ</text>
<use href="#rs" x="38" y="403"/><text x="66" y="415" class="d">продажа</text>
<rect x="162" y="400" width="70" height="32" class="inp"/><use href="#sp" x="232" y="400"/><text x="166" y="416" class="d">5</text><text x="265" y="415" class="d">тайнер, сек</text>
<use href="#cb" x="38" y="445"/><text x="66" y="456" class="d">использовать линию</text>
<use href="#cb" x="278" y="445"/><text x="306" y="456" class="d">лимит</text>
<rect x="37" y="478" width="43" height="32" class="inp"/><use href="#sp" x="81" y="478"/><text x="42" y="494" class="d">1</text><text x="119" y="494" class="d">допуск по сигналу в тиках</text>
<!-- group imbalance -->
<rect x="415" y="338" width="360" height="182" fill="none" stroke="#e0e0e0" stroke-width="2"/>
<rect x="426" y="331" width="95" height="16" fill="#f7f7f7"/><text x="430" y="339" class="d" style="fill:#555">Имбаланс</text>
<use href="#ra" x="428" y="359"/><text x="457" y="370" class="d">покупка</text>
<use href="#cb" x="555" y="361"/><text x="583" y="372" font-size="24" font-weight="bold" fill="#1f8a3a">ВКЛЮЧИТЬ</text>
<use href="#rs" x="428" y="401"/><text x="457" y="413" class="d">продажа</text>
<rect x="552" y="398" width="70" height="32" class="inp"/><use href="#sp" x="622" y="398"/><text x="556" y="414" class="d">5</text><text x="657" y="415" class="d">тайнер, сек</text>
<use href="#cb" x="428" y="445"/><text x="458" y="456" class="d">использовать линию</text>
<use href="#cb" x="672" y="445"/><text x="700" y="456" class="d">лимит</text>
<rect x="430" y="478" width="42" height="32" class="inp"/><use href="#sp" x="473" y="478"/><text x="435" y="494" class="d">1</text><text x="513" y="494" class="d">допуск по сигналу в тиках</text>
<use href="#cb" x="38" y="531"/><text x="66" y="541" class="d">комбинированный сигнал Дельта/Объем и Имбаланс</text>
</g>
</svg>
</body></html>
